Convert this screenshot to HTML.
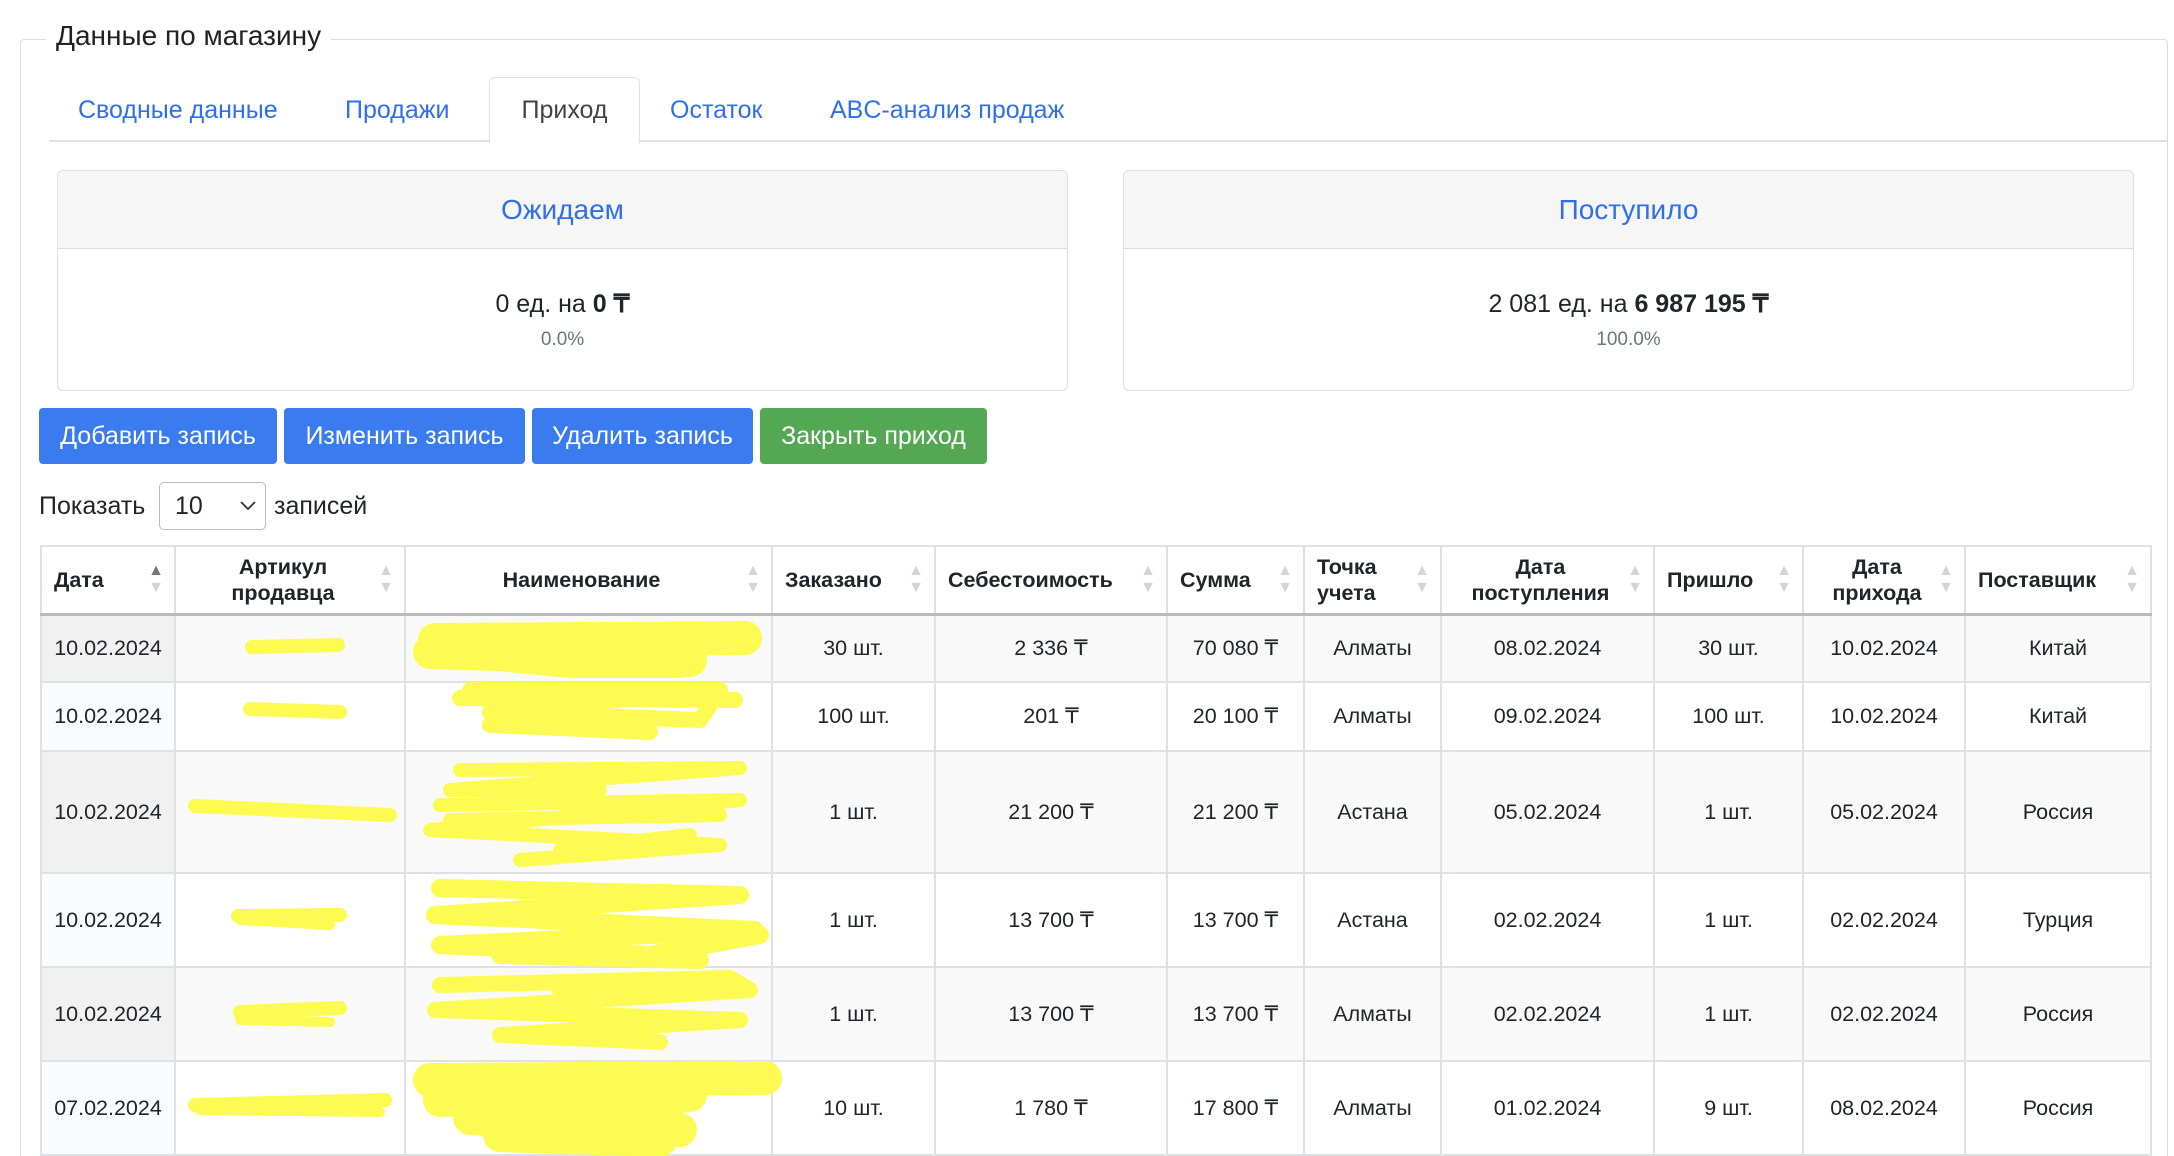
<!DOCTYPE html>
<html><head><meta charset="utf-8">
<style>
*{box-sizing:border-box;margin:0;padding:0}
html,body{width:2174px;height:1156px;overflow:hidden}
body{background:#fff;font-family:"Liberation Sans",sans-serif;color:#212529;position:relative}
.a{position:absolute}
.fs{left:20px;top:39px;width:2148px;height:1117px;border:1.5px solid #dcdcdc;border-bottom:none;border-radius:4px 4px 0 0}
.lg{left:46px;top:20px;background:#fff;padding:0 10px;font-size:28px;color:#222}
.tabline{left:49px;top:140px;width:2118px;height:1.5px;background:#dee2e6}
.tab{top:96px;font-size:25px;color:#2f6fed}
.tabact{left:489px;top:77px;width:151px;height:66px;border:1.5px solid #dee2e6;border-bottom:none;background:#fff;border-radius:6px 6px 0 0;font-size:25px;color:#444;text-align:center;padding-top:18px}
.card{border:1.5px solid #dfdfdf;border-radius:6px;overflow:hidden;background:#fff}
.ch{height:78px;background:#f6f6f6;border-bottom:1.5px solid #dcdcdc;text-align:center;font-size:28px;color:#2f6fed;line-height:78px}
.amt{text-align:center;font-size:25px;margin-top:40px}
.pct{text-align:center;font-size:19px;color:#6c757d;margin-top:10px}
.btn{top:408px;height:56px;border-radius:4px;color:#fff;font-size:25px;line-height:56px;text-align:center;background:#3a7bf0}
.tw{position:absolute;left:40px;top:545px;width:2120px;height:611px;overflow:hidden}
table{border-collapse:collapse;table-layout:fixed;font-size:21.5px}
td,th{border:2px solid #dee2e6;text-align:center;vertical-align:middle;position:relative}
th{font-weight:bold;height:68px;line-height:26px;border-bottom:3px solid #bbb;padding-right:14px}
th.l{text-align:left;padding-left:12px}
th .s{position:absolute;right:10px;top:50%;margin-top:-18px;font-size:16px;line-height:17px;color:#d4d4d4}
th .s b{color:#777;font-weight:normal}
tr.o td{background:#f9f9f9}
tr.o td:first-child{background:#f1f1f1}
tr.e td:first-child{background:#fafbfe}
</style></head><body>
<div class="a fs"></div>
<div class="a lg">Данные по магазину</div>
<div class="a tabline"></div>
<div class="a tab" style="left:78px">Сводные данные</div>
<div class="a tab" style="left:345px">Продажи</div>
<div class="a tabact">Приход</div>
<div class="a tab" style="left:670px">Остаток</div>
<div class="a tab" style="left:830px">ABC-анализ продаж</div>

<div class="a card" style="left:57px;top:170px;width:1011px;height:221px">
<div class="ch">Ожидаем</div>
<div class="amt">0 ед. на <b>0 ₸</b></div><div class="pct">0.0%</div></div>
<div class="a card" style="left:1123px;top:170px;width:1011px;height:221px">
<div class="ch">Поступило</div>
<div class="amt">2 081 ед. на <b>6 987 195 ₸</b></div><div class="pct">100.0%</div></div>

<div class="a btn" style="left:39px;width:238px">Добавить запись</div>
<div class="a btn" style="left:284px;width:241px">Изменить запись</div>
<div class="a btn" style="left:532px;width:221px">Удалить запись</div>
<div class="a btn" style="left:760px;width:227px;background:#54a854">Закрыть приход</div>

<div class="a" style="left:39px;top:492px;font-size:25px">Показать</div>
<div class="a" style="left:159px;top:482px;width:107px;height:48px;border:1.5px solid #bbb;border-radius:5px;font-size:25px;padding:9px 0 0 15px">10
<svg class="a" style="right:8px;top:17px" width="18" height="12"><path d="M2,2 L9,9 L16,2" fill="none" stroke="#333" stroke-width="1.8"/></svg></div>
<div class="a" style="left:274px;top:492px;font-size:25px">записей</div>

<div class="tw">
<table>
<colgroup><col style="width:134px"><col style="width:230px"><col style="width:367px"><col style="width:163px"><col style="width:232px"><col style="width:137px"><col style="width:137px"><col style="width:213px"><col style="width:149px"><col style="width:162px"><col style="width:186px"></colgroup>
<tr><th class="l">Дата<span class="s"><b>▲</b><br>▼</span></th><th>Артикул<br>продавца<span class="s">▲<br>▼</span></th><th>Наименование<span class="s">▲<br>▼</span></th><th class="l">Заказано<span class="s">▲<br>▼</span></th><th class="l">Себестоимость<span class="s">▲<br>▼</span></th><th class="l">Сумма<span class="s">▲<br>▼</span></th><th class="l">Точка<br>учета<span class="s">▲<br>▼</span></th><th>Дата<br>поступления<span class="s">▲<br>▼</span></th><th class="l">Пришло<span class="s">▲<br>▼</span></th><th>Дата<br>прихода<span class="s">▲<br>▼</span></th><th class="l">Поставщик<span class="s">▲<br>▼</span></th></tr>
<tr class="o" style="height:68px"><td>10.02.2024</td><td></td><td></td><td>30 шт.</td><td>2 336 ₸</td><td>70 080 ₸</td><td>Алматы</td><td>08.02.2024</td><td>30 шт.</td><td>10.02.2024</td><td>Китай</td></tr>
<tr class="e" style="height:69px"><td>10.02.2024</td><td></td><td></td><td>100 шт.</td><td>201 ₸</td><td>20 100 ₸</td><td>Алматы</td><td>09.02.2024</td><td>100 шт.</td><td>10.02.2024</td><td>Китай</td></tr>
<tr class="o" style="height:122px"><td>10.02.2024</td><td></td><td></td><td>1 шт.</td><td>21 200 ₸</td><td>21 200 ₸</td><td>Астана</td><td>05.02.2024</td><td>1 шт.</td><td>05.02.2024</td><td>Россия</td></tr>
<tr class="e" style="height:94px"><td>10.02.2024</td><td></td><td></td><td>1 шт.</td><td>13 700 ₸</td><td>13 700 ₸</td><td>Астана</td><td>02.02.2024</td><td>1 шт.</td><td>02.02.2024</td><td>Турция</td></tr>
<tr class="o" style="height:94px"><td>10.02.2024</td><td></td><td></td><td>1 шт.</td><td>13 700 ₸</td><td>13 700 ₸</td><td>Алматы</td><td>02.02.2024</td><td>1 шт.</td><td>02.02.2024</td><td>Россия</td></tr>
<tr class="e" style="height:94px"><td>07.02.2024</td><td></td><td></td><td>10 шт.</td><td>1 780 ₸</td><td>17 800 ₸</td><td>Алматы</td><td>01.02.2024</td><td>9 шт.</td><td>08.02.2024</td><td>Россия</td></tr>
</table>
</div>

<svg class="a" style="left:0;top:0" width="2174" height="1156">
<g fill="none" stroke="#fdfa52" stroke-linecap="round" stroke-linejoin="round">
<path stroke-width="34" d="M435,640 L745,638 M440,650 L690,660 L430,652"/>
<path stroke-width="20" d="M435,655 L570,668 L680,668"/>
<path stroke-width="16" d="M460,698 L735,700 M470,690 L720,690 L490,712 L700,720 L710,705 M490,725 L650,732"/>
<path stroke-width="14" d="M460,770 L740,768 L450,790 L600,790 M440,805 L740,800 L430,830 L720,845 L520,860 M450,820 L720,815 M560,850 L690,835"/>
<path stroke-width="18" d="M440,888 L740,895 L435,915 L755,930 L440,945 L650,955 L760,935 M500,955 L700,960"/>
<path stroke-width="16" d="M440,985 L730,978 L750,990 L435,1010 L740,1020 L500,1035 L660,1042 M560,990 L740,985"/>
<path stroke-width="34" d="M430,1080 L765,1078 M440,1100 L690,1095 L470,1118 L680,1130 M500,1135 L660,1140"/>
<path stroke-width="14" d="M252,647 L338,645 M250,709 L340,712 M195,806 L390,815 M238,916 L340,915 M240,1012 L340,1008 M195,1105 L385,1100"/>
<path stroke-width="10" d="M240,920 L330,925 M240,1020 L330,1022 M200,1110 L380,1112"/>
</g></svg>
</body></html>
